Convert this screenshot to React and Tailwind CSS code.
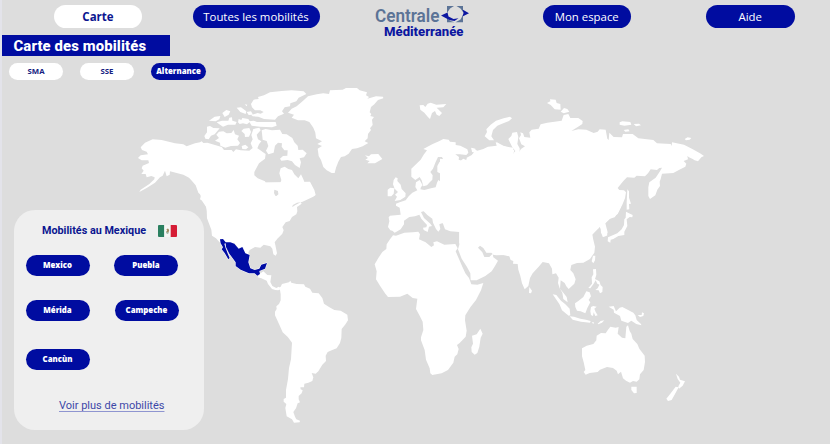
import React from "react";

const LAND = "#ffffff";

function NorthAmerica() {
  return (
    <>
      <g transform="translate(120 80) scale(.33333)">
        <path d="M62 202L75 188L98 178L125 180L165 190L190 193L200 199L225 190L240 187L245 184L250 189L262 188L285 195L305 201L312 210L335 210L340 216L348 208L362 211L388 212L398 204L392 190L398 178L394 165L400 147L418 143L422 151L410 164L414 178L424 184L417 193L412 205L420 210L429 217L437 222L435 236L417 250L403 276L403 286L413 295L435 304L441 318L458 322L460 343L468 349L476 343L473 322L479 316L484 300L478 280L482 265L494 260L505 267L516 270L523 283L535 295L543 283L551 300L555 313L569 322L572 329L585 338L583 348L565 353L540 357L530 365L520 372L516 381L527 379L525 392L262 400L259 382L246 362L243 346L235 338L227 316L214 301L207 293L190 284L173 280L150 274L149 284L140 289L135 272L128 287L120 292L105 308L80 324L58 336L62 329L88 312L103 298L104 292L94 288L80 292L77 282L64 282L71 272L65 265L68 257L87 249L85 241L65 241L54 234L62 226L84 223L80 215L66 210Z" />
        <path d="M261 140L270 138L280 144L299 145L284 163L273 167L266 178L256 176L253 168L261 157Z" />
        <path d="M289 164L297 155L310 154L320 160L334 159L341 150L345 163L357 167L352 178L360 189L354 197L333 198L316 203L301 197L300 188L285 182L297 174Z" />
        <path d="M364 153L371 146L388 144L393 156L387 170L375 171L374 162ZM365 198L376 194L385 202L378 208L367 207Z" />
        <path d="M425 151L437 147L456 151L480 149L487 162L500 163L517 174L523 187L533 197L535 210L548 209L560 220L552 232L539 235L543 247L539 264L525 255L516 244L503 240L484 242L480 236L489 228L502 227L503 211L493 211L485 200L486 190L474 188L465 197L461 218L445 223L438 212L445 198L440 183L428 179Z" />
        <path d="M267 122L284 110L301 108L298 118L287 124ZM307 99L319 90L331 94L326 104L314 111ZM290 127L306 122L325 122L328 113L336 112L337 122L350 126L346 134L324 134L309 140L298 133ZM350 83L363 82L379 94L377 102L361 96ZM374 73L382 74L380 79ZM356 117L364 120L367 114L385 117L390 125L381 133L369 130L359 132L354 127ZM387 124L401 122L411 126L467 126L470 137L456 142L420 140L395 137ZM380 96L393 94L399 104L386 105Z" />
        <path d="M393 72L401 59L416 57L414 51L432 46L450 37L485 33L515 31L551 34L559 42L536 53L529 64L511 70L510 79L494 82L486 94L492 101L474 109L465 119L432 117L415 110L398 109L394 105L413 99L422 101L431 96L421 91L405 91L396 82Z" />
      </g>
      <g transform="translate(200 190) scale(.33333)">
        <path fillRule="evenodd" d="M-12 -20L0 0L2 20L0 28L15 38L20 57L21 85L34 119L36 137L48 145L61 159L77 157L103 159L116 175L129 171L136 191L147 195L145 187L149 180L165 171L181 173L191 164L211 169L217 176L220 193L227 197L231 190L226 165L224 157L232 146L247 131L251 121L247 111L257 97L269 93L276 81L289 73L292 64L291 51L305 41L302 37L285 46L278 51L274 47L291 38L306 36L319 30L338 21L347 15L343 0L330 -25ZM223 -1L234 3L236 13L232 19L226 18L222 9Z" />
        <path d="M178 253L190 244L202 255L214 256L211 276L217 288L229 294L236 290L242 296L235 301L226 300L216 297L204 282L200 272L184 265L173 262Z" />
        <path
          d="M60 148L69 147L77 157L91 157L103 161L116 176L127 171L136 190L149 195L145 217L151 235L164 240L178 236L184 224L201 219L195 236L178 243L180 252L172 257L164 250L147 250L122 239L107 228L107 217L88 191L78 171L77 160L73 161L77 175L84 193L89 204L85 208L74 189L65 178L69 172L62 160Z"
          stroke={LAND}
          strokeWidth="3"
        />
        <path
          fill="#000ca4"
          d="M60 148L69 147L77 157L91 157L103 161L116 176L127 171L136 190L149 195L145 217L151 235L164 240L178 236L184 224L201 219L195 236L178 243L180 252L172 257L164 250L147 250L122 239L107 228L107 217L88 191L78 171L77 160L73 161L77 175L84 193L89 204L85 208L74 189L65 178L69 172L62 160Z"
        />
      </g>
    </>
  );
}

function SouthAmerica() {
  return (
    <g transform="translate(260 270) scale(.33333)">
      <path d="M54 55L62 50L66 42L87 37L91 32L94 38L110 42L132 43L136 50L150 56L157 68L176 70L187 84L192 101L207 111L223 120L242 122L262 134L264 151L257 162L245 177L244 204L240 219L230 235L215 241L203 246L197 257L198 273L187 284L175 304L167 311L155 309L160 322L157 333L145 338L133 341L132 352L121 352L122 358L128 361L125 370L116 378L116 388L120 397L113 400L108 415L100 426L105 440L109 448L120 452L119 457L102 458L96 448L80 439L76 414L79 402L71 395L71 387L78 383L78 360L84 327L87 294L93 268L96 218L84 202L68 187L57 162L45 136L45 125L50 117L49 109L57 102L62 91L62 73L60 60Z" />
    </g>
  );
}

function NorthAtlantic() {
  return (
    <g transform="translate(270 75) scale(.33333)">
      <path d="M54 113L65 101L80 94L101 76L114 64L140 58L160 55L177 57L180 46L218 44L228 39L261 39L269 46L291 52L288 61L297 66L292 71L318 64L339 65L340 70L324 75L313 88L303 96L299 112L304 117L301 123L312 126L306 134L308 150L300 160L303 165L294 177L293 190L284 199L295 204L278 214L261 220L246 222L236 236L224 244L213 246L205 260L198 278L194 294L185 294L170 286L160 276L153 255L146 243L143 221L156 213L142 207L156 199L138 190L136 173L130 158L118 141L104 136L84 136L65 128L72 119Z" />
      <path d="M285 241L297 244L303 238L325 237L337 252L315 265L292 265L299 258L286 254L294 249Z" />
      <path d="M449 91L460 90L466 96L473 86L482 83L499 89L529 87L520 97L500 98L516 114L508 123L500 119L495 108L486 114L480 132L473 125L463 113L451 104Z" />
    </g>
  );
}

function Europe() {
  return (
    <g transform="translate(360 120) scale(.33333)">
      <path d="M460 83L445 81L430 77L408 65L415 77L392 83L377 90L370 98L350 103L347 99L352 92L334 83L336 91L342 97L336 104L342 109L328 115L319 118L321 125L305 122L296 119L297 111L286 103L300 103L319 105L325 98L322 88L301 77L287 75L287 67L270 65L266 59L250 57L237 64L218 72L190 87L201 91L191 104L182 119L154 146L154 170L166 180L179 171L185 181L190 199L201 196L210 186L217 179L218 166L211 156L219 146L226 128L234 111L246 111L249 117L238 127L232 138L232 156L244 162L267 152L270 160L252 167L240 167L243 186L235 180L231 188L227 202L213 205L193 210L181 208L183 201L188 196L179 180L168 187L166 201L172 211L157 218L146 229L137 241L119 247L108 251L108 257L119 263L122 284L90 287L86 292L88 304L84 321L91 331L97 332L104 338L112 334L122 328L132 313L132 302L148 291L165 289L178 284L184 296L201 315L199 322L189 323L191 330L203 336L207 320L216 318L211 311L192 294L183 276L191 274L202 285L217 296L219 308L228 327L235 335L241 327L238 313L248 308L255 328L271 334L298 336L298 370L450 370Z" />
      <path d="M101 180L107 172L113 175L112 183L122 194L125 207L137 220L136 230L121 240L104 243L111 230L105 224L114 216L104 206L99 193ZM83 209L91 203L103 205L101 221L94 229L83 229Z" />
    </g>
  );
}

function AfricaAndArabia() {
  return (
    <g transform="translate(360 220) scale(.33333)">
      <path d="M99 46L108 47L133 38L158 37L175 35L180 43L177 58L197 67L214 81L222 76L220 67L231 64L253 74L286 72L293 85L287 94L296 115L306 138L316 160L327 174L334 193L352 194L370 189L363 211L348 240L331 262L316 286L315 301L320 332L317 350L299 369L291 375L296 387L292 403L284 410L280 428L264 450L245 460L217 465L211 460L209 445L198 419L194 390L183 361L183 352L190 330L188 305L179 287L168 267L172 236L158 234L142 221L120 230L84 231L76 221L60 197L48 178L50 154L44 133L55 114L67 96L79 87L80 73L89 59Z" />
      <path d="M298 26L298 74L294 88L305 116L321 141L331 160L332 181L350 181L376 168L395 154L405 138L414 122L400 112L398 101L388 111L373 111L367 97L354 83L360 77L370 84L379 98L394 98L401 105L430 105L443 108L470 112L470 10Z" />
      <path d="M361 326L368 341L362 353L358 380L352 399L344 404L335 396L334 382L339 371L336 347L350 343Z" />
    </g>
  );
}

function NorthAsia() {
  return (
    <g transform="translate(460 90) scale(.33333)">
      <path d="M-60 206L0 214L10 206L20 211L20 203L48 188L36 186L34 173L46 176L47 184L70 177L84 170L110 167L107 157L123 166L148 174L163 181L160 192L175 190L183 177L195 169L184 163L177 145L183 135L181 127L189 130L193 141L211 143L208 127L215 119L236 116L242 103L262 98L305 92L311 75L325 72L331 84L355 84L368 93L367 102L352 112L334 123L355 118L379 119L401 129L413 125L419 118L437 119L442 146L446 150L448 128L461 141L486 142L489 132L518 132L535 145L580 150L591 160L632 162L635 168L636 157L672 164L697 177L720 190L732 198L724 202L714 214L704 211L698 207L687 202L682 198L684 208L671 213L679 221L676 230L658 239L640 249L606 251L602 267L599 275L600 288L592 299L586 316L570 327L565 318L565 292L568 277L587 263L600 244L606 233L598 234L591 240L572 238L564 250L555 259L530 257L523 263L501 262L490 273L473 294L478 300L492 301L498 307L495 325L487 344L475 367L464 382L450 386L436 400L443 427L439 438L428 440L428 424L418 410L407 423L397 434L398 450L60 450L60 400L-60 400Z" />
      <path d="M74 139L81 126L79 118L92 104L108 92L131 85L150 80L156 85L147 93L126 101L112 107L99 120L94 139L102 151L88 151Z" />
      <path d="M145 147L154 138L157 128L171 126L175 141L172 162L179 175L179 189L170 194L159 191L166 183L157 172L151 160Z" />
      <path d="M261 39L271 34L270 28L287 29L290 39L301 42L302 59L284 58L272 45ZM302 65L312 54L322 57L328 65L311 70ZM479 97L487 94L511 96L514 104L493 107L479 104ZM521 102L537 101L543 106L528 109ZM491 120L505 118L509 124L496 125ZM674 147L683 142L694 144L689 149L678 151Z" />
      <path d="M502 298L507 304L507 323L513 341L507 342L508 358L500 359L500 337Z" />
    </g>
  );
}

function SouthAsiaAndOceania() {
  return (
    <g transform="translate(470 210) scale(.33333)">
      <path d="M-20 -20L-20 80L20 103L30 105L43 115L50 127L69 127L77 136L108 135L118 139L122 150L130 153L129 161L143 162L145 179L151 198L156 220L164 238L175 228L180 204L188 190L206 170L218 156L237 160L246 176L247 193L258 190L266 203L264 219L269 235L277 248L280 267L293 277L290 261L280 248L270 236L272 211L284 219L289 229L296 237L313 221L317 208L310 190L301 180L304 165L321 159L340 158L360 147L373 128L375 110L366 73L387 54L391 44L393 68L399 81L412 76L410 60L403 42L418 27L443 12L453 -10L380 -40Z" />
      <path d="M468 5L477 10L488 15L487 22L479 21L470 28L472 48L463 65L463 75L445 78L430 87L422 89L421 98L413 94L414 82L428 76L442 70L455 58L462 45L463 28L467 23Z" />
      <path d="M369 137L376 137L375 151L370 160L365 154ZM178 231L186 242L183 250L177 249ZM369 178L378 177L379 195L375 207L388 214L392 226L382 221L377 211L371 221L361 235L355 234L366 221L365 202L370 193ZM389 223L398 231L397 246L390 250L386 241L376 240L383 235Z" />
      <path d="M248 253L259 255L273 272L286 283L299 296L301 316L296 317L276 301L268 282ZM315 280L325 273L340 261L349 244L359 247L363 259L356 270L361 277L352 294L346 310L332 304L321 302L316 291ZM363 291L370 288L380 290L373 296L377 306L383 316L376 318L371 307L369 318L363 315L361 304ZM299 319L312 320L331 326L348 329L362 333L360 338L333 335L308 329ZM365 337L372 337L370 342ZM383 341L392 333L403 331L396 338L385 343Z" />
      <path d="M416 290L431 288L438 304L449 293L457 291L473 299L490 308L496 316L500 330L513 342L514 346L499 342L484 332L474 339L454 332L450 318L432 308L431 299ZM503 315L515 315L516 307L522 310L520 318L510 321Z" />
      <path d="M336 415L350 407L370 402L379 391L380 377L393 369L407 370L414 359L421 350L437 353L446 351L443 371L456 383L466 385L469 350L474 346L479 363L484 371L488 387L502 402L508 416L524 437L525 456L521 480L510 493L508 508L500 515L489 513L480 518L468 512L459 505L453 485L444 493L440 482L429 474L411 471L390 479L383 486L359 489L347 494L341 486L346 480L341 457L336 439Z" />
      <path d="M484 530L500 530L500 549L492 550L484 540ZM618 491L627 500L630 509L645 514L638 527L627 536L625 529L631 518L623 507ZM617 530L626 532L615 552L605 570L594 573L589 566L601 551Z" />
    </g>
  );
}

function WorldMap() {
  return (
    <svg
      className="absolute inset-0 h-full w-full"
      viewBox="0 0 830 444"
      fill={LAND}
      stroke="none"
      aria-hidden="true"
    >
      <NorthAmerica />
      <SouthAmerica />
      <NorthAtlantic />
      <Europe />
      <AfricaAndArabia />
      <NorthAsia />
      <SouthAsiaAndOceania />
    </svg>
  );
}

function Logo() {
  return (
    <svg className="ml-[54px] h-[38px] w-[98px] shrink-0" viewBox="0 0 98 38" role="img">
      <text x="1" y="22" textLength="64.5" lengthAdjust="spacingAndGlyphs" fontFamily="Roboto, sans-serif" fontWeight="600" fontSize="18" fill="#5b7396">
        Centrale
      </text>
      <text x="10" y="36" textLength="79.5" lengthAdjust="spacingAndGlyphs" fontFamily="Roboto, sans-serif" fontWeight="800" fontSize="13" fill="#0c16a0">
        Méditerranée
      </text>
      <path fill="#5b7396" d="M73 6H80L76 8.5L73 13ZM82.5 6H89V12L86.5 8.5ZM89 15V22.3H81.5L86.5 19.5ZM73 18L76.5 21L80.5 22.3H73Z" />
      <path fill="#0c16a0" d="M67 15.5L73.5 12.5L74.5 16.5L79.5 19L84.5 18.3L80.5 21L76 20.3L72.5 18.5ZM88.5 9.5L95 13.2L88.5 16.5L89.5 13Z" />
    </svg>
  );
}

function MexicanFlag() {
  return (
    <svg className="ml-3 h-3 w-[19px] shrink-0" viewBox="0 0 19 12">
      <path fill="#2b8060" d="M1 0H6.3V12H1Q0 12 0 11V1Q0 0 1 0Z" />
      <path fill="#f7f7f5" d="M6.3 0H12.7V12H6.3Z" />
      <path fill="#d51c35" d="M12.7 0H18Q19 0 19 1V11Q19 12 18 12H12.7Z" />
      <path fill="#a48d64" d="M8.4 4.2L10 3.4L11.2 5L10.5 7.4L9 7.6L8.2 6.5L9.2 5.6Z" />
      <path fill="#6c9980" d="M8 6.4L9 7.8L10.8 7.4L10 8.8L8.4 8.3Z" />
    </svg>
  );
}

const cityPill =
  "flex h-[21px] w-16 items-center justify-center rounded-full bg-[#000ca0] pt-px text-[7.8px] font-extrabold text-white";

export default function App() {
  return (
    <div className="relative h-[444px] w-[830px] overflow-hidden border-l-2 border-[#e3e3ea] bg-[#dddddd] font-['Open_Sans',sans-serif]">
      <div className="absolute inset-y-0 -left-0.5 w-[830px]">
        <WorldMap />
      </div>

      <div className="relative">
        <nav className="flex h-[35px] items-start text-[11.4px] font-medium text-white">
          <button className="ml-[52px] mt-[5px] h-[23px] w-[88px] rounded-full bg-white text-[11.5px] font-bold text-[#0b1690]">
            Carte
          </button>
          <button className="ml-[50.5px] mt-[5px] h-[23px] w-[127px] rounded-full bg-[#000ca0]">
            Toutes les mobilités
          </button>
          <Logo />
          <button className="ml-[71px] mt-[5px] h-[23px] w-[88.5px] rounded-full bg-[#000ca0]">
            Mon espace
          </button>
          <button className="ml-[75px] mt-[5px] h-[23px] w-[88.5px] rounded-full bg-[#000ca0]">
            Aide
          </button>
        </nav>

        <h1 className="flex h-[21px] w-[168px] items-center bg-[#000ca0] pl-[11.5px] pt-px font-['Roboto',sans-serif] text-[14.9px] font-extrabold tracking-[.1px] text-white">
          Carte des mobilités
        </h1>

        <div className="ml-[7px] mt-[7px] flex gap-[17px] text-[7.8px] font-bold text-[#142080]">
          <button className="h-[17px] w-[54px] rounded-full bg-white pt-px">SMA</button>
          <button className="h-[17px] w-[54px] rounded-full bg-white pt-px">SSE</button>
          <button className="h-[17px] w-[55px] rounded-full bg-[#000ca0] pt-px text-[7.8px] font-extrabold text-white">
            Alternance
          </button>
        </div>

        <section className="ml-3 mt-[130px] flex h-[220px] w-[190px] flex-col rounded-[21px] bg-[#efefef] pt-[15px]">
          <div className="flex h-3 items-center pl-7">
            <h2 className="whitespace-nowrap pt-px font-['Roboto',sans-serif] text-[10.8px] font-bold text-[#0b1690]">
              Mobilités au Mexique
            </h2>
            <MexicanFlag />
          </div>
          <div className="ml-[11.5px] mt-[18px] grid grid-cols-[64px_64px] gap-x-[24.5px]">
            <button className={cityPill}>Mexico</button>
            <button className={cityPill}>Puebla</button>
            <button className={cityPill + " mt-[24px]"}>Mérida</button>
            <button className={cityPill + " ml-[.5px] mt-[24px]"}>Campeche</button>
            <button className={cityPill + " mt-[28px]"}>Cancùn</button>
          </div>
          <a className="ml-[45px] mt-[28px] font-['Roboto',sans-serif] text-[11px] leading-4 text-[#3d48a8] underline decoration-[#8f95d0] underline-offset-2">
            Voir plus de mobilités
          </a>
        </section>
      </div>
    </div>
  );
}
